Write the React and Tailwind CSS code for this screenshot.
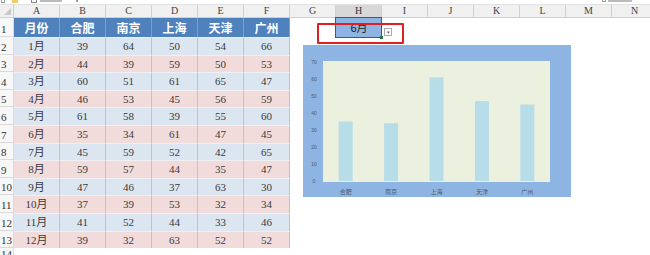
import React from "react";

const cities = ["合肥", "南京", "上海", "天津", "广州"];
const data = [
  ["1月", 39, 64, 50, 54, 66],
  ["2月", 44, 39, 59, 50, 53],
  ["3月", 60, 51, 61, 65, 47],
  ["4月", 46, 53, 45, 56, 59],
  ["5月", 61, 58, 39, 55, 60],
  ["6月", 35, 34, 61, 47, 45],
  ["7月", 45, 59, 52, 42, 65],
  ["8月", 59, 57, 44, 35, 47],
  ["9月", 47, 46, 37, 63, 30],
  ["10月", 37, 39, 53, 32, 34],
  ["11月", 41, 52, 44, 33, 46],
  ["12月", 39, 32, 63, 52, 52],
];
const letters = ["A", "B", "C", "D", "E", "F", "G", "H", "I", "J", "K", "L", "M", "N"];

function Chart() {
  const vals = data[5].slice(1);
  const y = (v) => 136 - 1.7 * v;
  return (
    <svg width="268" height="152" viewBox="0 0 268 152" className="absolute left-[303px] top-[45px]">
      <rect x="0" y="0" width="268" height="152" fill="#8eb4e3" />
      <rect x="20" y="16" width="227" height="121" fill="#ebf1de" />
      {[0, 10, 20, 30, 40, 50, 60, 70].map((t) => (
        <text key={t} x="11" y={y(t) + 1.8} fontSize="5" fill="#4a5a70" textAnchor="middle" fontFamily="Liberation Sans, sans-serif">
          {t}
        </text>
      ))}
      {vals.map((v, i) => {
        const cx = 42.7 + 45.4 * i;
        return (
          <g key={i}>
            <rect x={cx - 7} y={y(v)} width="14" height={136 - y(v)} fill="#b7dde8" />
            <text x={cx} y="149" fontSize="6" fill="#4a5a70" textAnchor="middle" fontFamily="Noto Sans CJK SC, sans-serif">
              {cities[i]}
            </text>
          </g>
        );
      })}
    </svg>
  );
}

function RowHead({ n, h }) {
  return (
    <div className={`w-[14px] shrink-0 ${h} bg-[#f7f7f7] border-r border-b border-[#dadada] flex items-end pl-[1px] text-[11px] leading-[14px] text-[#333]`}>
      {n}
    </div>
  );
}

export default function App() {
  return (
    <div className="relative w-[650px] h-[255px] overflow-hidden bg-white font-['Liberation_Serif','Noto_Sans_CJK_SC',serif]">
      {/* toolbar remnant */}
      <div className="h-[5px] bg-white border-b border-[#e2e2e2] flex items-start pl-[1px]">
        <div className="w-[4px] h-[3px] border border-[#999] border-t-0" />
        <div className="ml-[7px] w-[6px] h-[3px] bg-[#f2cd63]" />
        <div className="ml-[13px] w-[6px] h-[3px] border border-[#888] border-t-0" />
        <div className="ml-[3px] w-[22px] h-[2px] bg-[#bbb]" />
        <div className="ml-[14px] w-[2px] h-[2px] bg-[#999]" />
        <div className="ml-auto w-[4px] h-[2px] border border-[#999] border-t-0" />
        <div className="ml-[2px] mr-[18px] w-[24px] h-[2px] bg-[#bbb]" />
      </div>
      {/* column headers */}
      <div className="flex h-[13px]">
        <div className="w-[14px] shrink-0 bg-[#f0f0f0] border-r border-b border-[#d0d0d0] flex items-end justify-end p-[2px]">
          <div className="w-0 h-0 border-l-[7px] border-l-transparent border-b-[7px] border-b-[#c8c8c8]" />
        </div>
        {letters.map((l) => (
          <div
            key={l}
            className={`w-[46px] shrink-0 border-r border-b border-[#d0d0d0] flex items-center justify-center text-[10px] leading-none ${
              l === "H" ? "bg-[#d8d8d8] text-[#333]" : "bg-[#f0f0f0] text-[#444]"
            }`}
          >
            {l}
          </div>
        ))}
      </div>
      {/* row 1 */}
      <div className="flex h-[19px]">
        <RowHead n="1" h="h-[19px]" />
        {["月份", ...cities].map((c) => (
          <div key={c} className="w-[46px] shrink-0 bg-[#4f81bd] border-r border-[#7a9fcc] flex items-center justify-center text-white font-bold text-[12px] font-['Noto_Sans_CJK_SC',sans-serif]">
            {c}
          </div>
        ))}
        <div className="w-[46px] shrink-0" />
        <div className="w-[46px] shrink-0 bg-[#8db4e2] flex items-center justify-center text-[11px] text-[#222] font-['Noto_Sans_CJK_SC',sans-serif]">
          6月
        </div>
        <div className="w-[46px] shrink-0 flex items-end pb-[1px] pl-[2px]">
          <div className="w-[8px] h-[8px] bg-white border border-[#aaa] flex items-center justify-center text-[5px] leading-none text-[#555]">▾</div>
        </div>
      </div>
      {/* data rows */}
      {data.map((row, i) => (
        <div key={i} className="flex h-[17.6px]">
          <RowHead n={String(i + 2)} h="h-[17.6px]" />
          {row.map((v, j) => (
            <div
              key={j}
              className={`w-[46px] shrink-0 border-r border-t border-t-[#eef0f3] border-r-[#b9c3d2] flex items-center justify-center text-[11px] text-[#3a3a3a] ${
                i % 2 === 0 ? "bg-[#dce6f1]" : "bg-[#f2dcdb]"
              }`}
            >
              {v}
            </div>
          ))}
        </div>
      ))}
      {/* row 14 */}
      <div className="flex h-[10px]">
        <div className="w-[14px] shrink-0 bg-[#f7f7f7] border-r border-[#dadada] text-[11px] leading-[12px] pl-[1px] text-[#333]">14</div>
      </div>

      {/* selection and annotation overlays */}
      <div className="absolute left-[335px] top-[17px] w-[47px] h-[21px] border border-[#217346]">
        <div className="absolute -right-[2px] -bottom-[2px] w-[3px] h-[3px] bg-[#217346]" />
      </div>
      <div className="absolute left-[317px] top-[23px] w-[87px] h-[21px] border-2 border-[#e02020] rounded-[1px]" />

      <Chart />
    </div>
  );
}
